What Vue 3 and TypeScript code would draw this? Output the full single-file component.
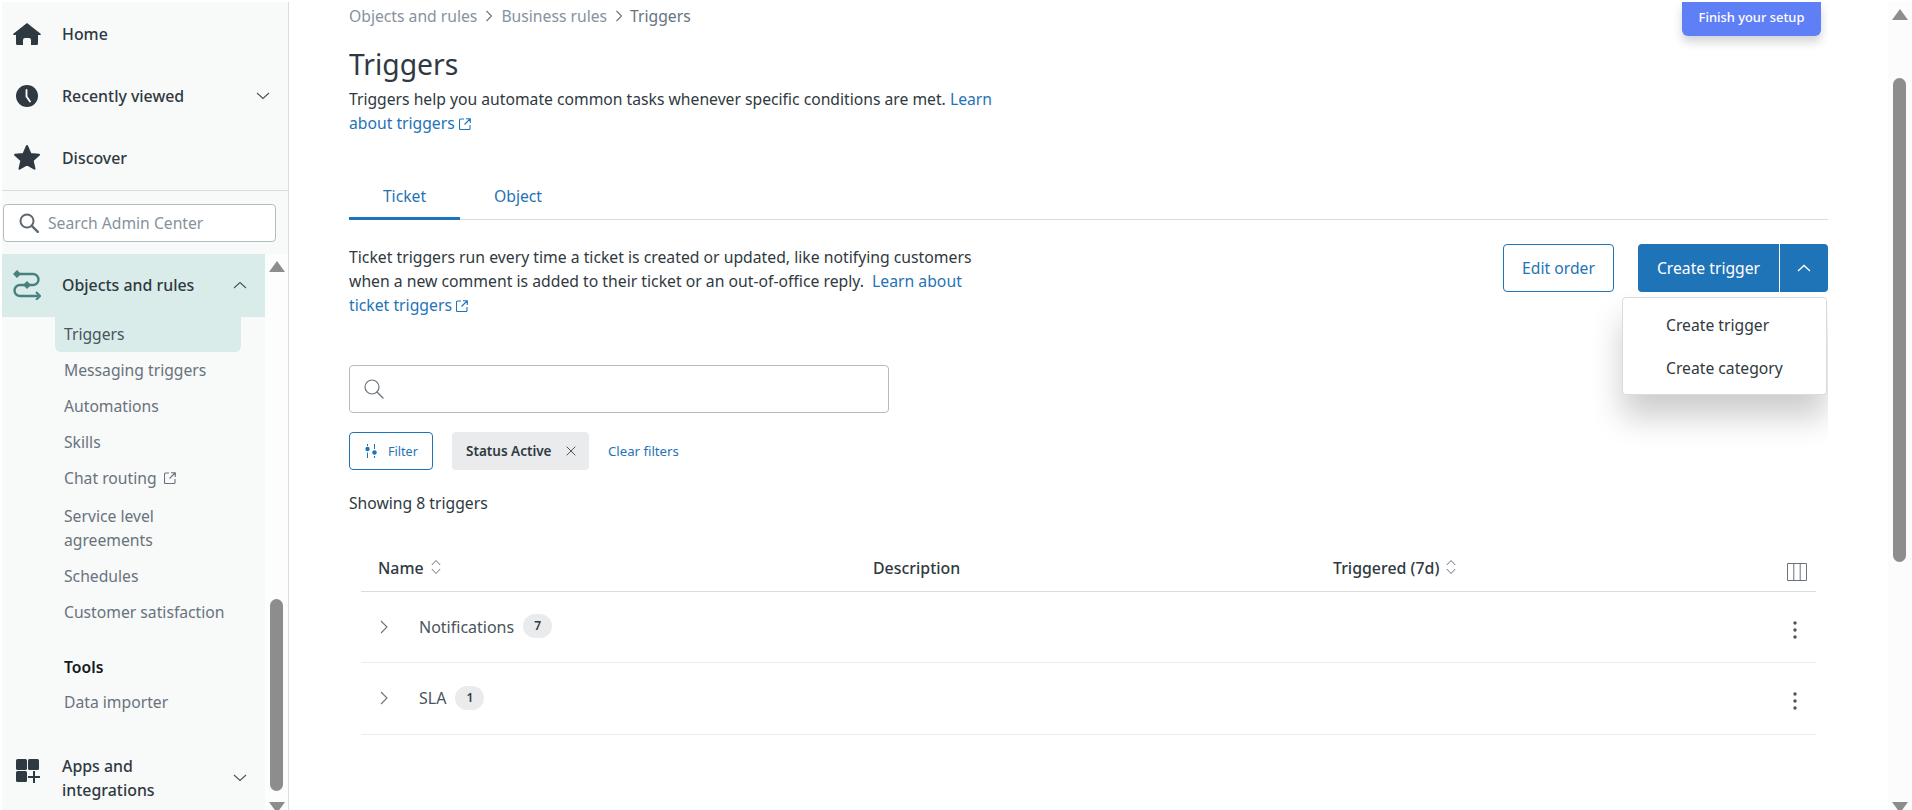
<script setup lang="ts">
interface SubItem { label: string; external?: boolean; active?: boolean; tall?: boolean }
const subItems: SubItem[] = [
  { label: 'Triggers', active: true },
  { label: 'Messaging triggers' },
  { label: 'Automations' },
  { label: 'Skills' },
  { label: 'Chat routing', external: true },
  { label: 'Service level agreements', tall: true },
  { label: 'Schedules' },
  { label: 'Customer satisfaction' },
]
const rows = [
  { name: 'Notifications', count: 7 },
  { name: 'SLA', count: 1 },
]
</script>

<template>
  <div class="app">
    <aside class="sidebar">
      <nav class="top-nav">
        <a class="nav-row">
          <svg class="nav-icon" viewBox="0 0 28 24" width="28" height="24"><path fill="#2f3941" d="M14 1 27.6 11.8c.6.5.2 1.2-.4 1.2H25v8.500a1.500 1.500 0 0 1-1.500 1.500H18v-5a2 2 0 0 0-2-2h-4a2 2 0 0 0-2 2v5H4.500A1.500 1.500 0 0 1 3 21.500V13H.8c-.6 0-1-.7-.4-1.200z"/></svg>
          <span>Home</span>
        </a>
        <a class="nav-row">
          <svg class="nav-icon" viewBox="0 0 28 24" width="28" height="24"><circle cx="14" cy="12" r="11" fill="#2f3941"/><path d="M13.500 6v6.500l3.500 5" fill="none" stroke="#fff" stroke-width="1.800" stroke-linecap="round"/></svg>
          <span>Recently viewed</span>
          <svg class="chev" viewBox="0 0 14 8" width="14" height="8"><path d="M1 1l6 5.500L13 1" fill="none" stroke="#49545c" stroke-width="1.100"/></svg>
        </a>
        <a class="nav-row">
          <svg class="nav-icon" viewBox="0 0 28 28" width="28" height="28"><path fill="#2f3941" stroke="#2f3941" stroke-width="2" stroke-linejoin="round" d="M14 2l3.500 8 8.500.8-6.400 5.600 1.900 8.300-7.500-4.400-7.500 4.400 1.900-8.300L2 10.800l8.500-.8z"/></svg>
          <span>Discover</span>
        </a>
      </nav>

      <div class="side-search">
        <svg viewBox="0 0 20 20" width="20" height="20"><circle cx="8" cy="8" r="6.500" fill="none" stroke="#5d6a72" stroke-width="2"/><path d="M12.800 12.800l6 6" stroke="#5d6a72" stroke-width="2.400" stroke-linecap="round"/></svg>
        <span>Search Admin Center</span>
      </div>

      <div class="side-scroll">
        <div class="side-list">
          <a class="product-row">
            <svg class="nav-icon" viewBox="0 0 28 30" width="28" height="30">
              <g fill="none" stroke="#47807f" stroke-width="2.400">
                <path d="M4 4h16a5.500 5.500 0 0 1 0 11H7a5.500 5.500 0 0 0 0 11h18"/>
                <path d="M23 22l4 4-4 4" stroke-width="2"/>
              </g>
              <path fill="#47807f" d="M4 0l4 4-4 4-4-4zM14 11l4 4-4 4-4-4z"/>
            </svg>
            <span>Objects and rules</span>
            <svg class="chev" viewBox="0 0 14 8" width="14" height="8"><path d="M1 7l6-5.500L13 7" fill="none" stroke="#49545c" stroke-width="1.100"/></svg>
          </a>
          <ul class="sub">
            <li v-for="item in subItems" :key="item.label" :class="{ active: item.active, tall: item.tall }">
              <span>{{ item.label }}</span>
              <svg v-if="item.external" class="ext" viewBox="0 0 12 12" width="12" height="12"><path d="M5 1H1.500a1 1 0 0 0-1 1v8.500a1 1 0 0 0 1 1H10a1 1 0 0 0 1-1V7M7 .7h4.300V5M11 1 5.500 6.500" fill="none" stroke="currentColor" stroke-width="1.100"/></svg>
            </li>
          </ul>
          <div class="tools">Tools</div>
          <div class="tool-item">Data importer</div>
          <a class="product-row apps">
            <svg class="nav-icon apps-icon" viewBox="0 0 28 24" width="28" height="24">
              <g fill="#2f3941">
                <rect x="3" y="0" width="11" height="11" rx="1.500"/>
                <rect x="15" y="0" width="11" height="11" rx="1.500"/>
                <rect x="3" y="12" width="11" height="11" rx="1.500"/>
                <path d="M20 12h2v5h5v2h-5v5h-2v-5h-5v-2h5z"/>
              </g>
            </svg>
            <span>Apps and<br>integrations</span>
            <svg class="chev" viewBox="0 0 14 8" width="14" height="8"><path d="M1 1l6 5.500L13 1" fill="none" stroke="#49545c" stroke-width="1.100"/></svg>
          </a>
        </div>
        <div class="scrollbar small">
          <i class="arrow up"></i>
          <i class="thumb"></i>
          <i class="arrow down"></i>
        </div>
      </div>
    </aside>

    <main class="main">
      <div class="content">
        <button class="finish">Finish your setup</button>
        <div class="crumbs">
          <span>Objects and rules</span>
          <svg viewBox="0 0 8 12" width="8" height="12"><path d="M1.500 1l5 5-5 5" fill="none" stroke="#68737d" stroke-width="1.100"/></svg>
          <span>Business rules</span>
          <svg viewBox="0 0 8 12" width="8" height="12"><path d="M1.500 1l5 5-5 5" fill="none" stroke="#68737d" stroke-width="1.100"/></svg>
          <span class="current">Triggers</span>
        </div>
        <h1>Triggers</h1>
        <p class="lead">Triggers help you automate common tasks whenever specific conditions are met. <a>Learn</a> <a>about triggers <svg class="ext" viewBox="0 0 12 12" width="12" height="12"><path d="M5 1H1.500a1 1 0 0 0-1 1v8.500a1 1 0 0 0 1 1H10a1 1 0 0 0 1-1V7M7 .7h4.300V5M11 1 5.500 6.500" fill="none" stroke="currentColor" stroke-width="1.100"/></svg></a></p>

        <div class="tabs">
          <div class="tab selected">Ticket</div>
          <div class="tab">Object</div>
        </div>

        <div class="intro">
          <p class="lead para">Ticket triggers run every time a ticket is created or updated, like notifying customers when a new comment is added to their ticket or an out-of-office reply. <a class="para-link">Learn about</a> <a>ticket triggers <svg class="ext" viewBox="0 0 12 12" width="12" height="12"><path d="M5 1H1.500a1 1 0 0 0-1 1v8.500a1 1 0 0 0 1 1H10a1 1 0 0 0 1-1V7M7 .7h4.300V5M11 1 5.500 6.500" fill="none" stroke="currentColor" stroke-width="1.100"/></svg></a></p>
          <div class="actions">
            <button class="btn-outline">Edit order</button>
            <div class="split">
              <button class="btn-primary">Create trigger</button>
              <button class="btn-caret"><svg viewBox="0 0 14 8" width="14" height="8"><path d="M1 7l6-5.500L13 7" fill="none" stroke="#fff" stroke-width="1.300"/></svg></button>
            </div>
            <div class="menu">
              <div>Create trigger</div>
              <div>Create category</div>
            </div>
          </div>
        </div>

        <div class="search">
          <svg viewBox="0 0 20 20" width="20" height="20"><circle cx="8" cy="8" r="7" fill="none" stroke="#68737d" stroke-width="1.200"/><path d="M13 13l6 6" stroke="#68737d" stroke-width="1.300" stroke-linecap="round"/></svg>
        </div>

        <div class="filters">
          <button class="filter-btn">
            <svg viewBox="0 0 12 14" width="12" height="14"><g fill="#1f73b7"><circle cx="2.500" cy="5" r="2.200"/><circle cx="9.500" cy="8.500" r="2.200"/><rect x="2" y="0" width="1" height="2"/><rect x="2" y="8.500" width="1" height="5.500"/><rect x="9" y="0" width="1" height="5"/><rect x="9" y="12" width="1" height="2"/></g></svg>
            <span>Filter</span>
          </button>
          <div class="chip">
            <span>Status Active</span>
            <svg viewBox="0 0 10 10" width="10" height="10"><path d="M.7.7l8.600 8.600M9.300.7.700 9.300" stroke="#49545c" stroke-width="1"/></svg>
          </div>
          <a class="clear">Clear filters</a>
        </div>

        <div class="showing">Showing 8 triggers</div>

        <div class="table">
          <div class="thead">
            <div class="th">Name <svg class="sort" viewBox="0 0 10 16" width="10" height="16"><path d="M.8 6 5 1.500 9.200 6M.8 10 5 14.500 9.200 10" fill="none" stroke="#68737d" stroke-width="1"/></svg></div>
            <div class="th">Description</div>
            <div class="th">Triggered (7d) <svg class="sort" viewBox="0 0 10 16" width="10" height="16"><path d="M.8 6 5 1.500 9.200 6M.8 10 5 14.500 9.200 10" fill="none" stroke="#68737d" stroke-width="1"/></svg></div>
            <svg class="columns" viewBox="0 0 20 20" width="20" height="20"><path d="M.5 1.500h19v17H.5zM6.800 1.500v17M13.200 1.500v17" fill="none" stroke="#68737d" stroke-width="1"/></svg>
          </div>
          <div v-for="row in rows" :key="row.name" class="row">
            <svg class="row-chev" viewBox="0 0 8 14" width="8" height="14"><path d="M1 1l6 6-6 6" fill="none" stroke="#68737d" stroke-width="1.100"/></svg>
            <span class="row-name">{{ row.name }}</span>
            <span class="badge">{{ row.count }}</span>
            <svg class="kebab" viewBox="0 0 4 18" width="4" height="18"><g fill="#49545c"><circle cx="2" cy="2" r="1.700"/><circle cx="2" cy="9" r="1.700"/><circle cx="2" cy="16" r="1.700"/></g></svg>
          </div>
        </div>
      </div>
      <div class="scrollbar large">
        <i class="arrow up"></i>
        <i class="thumb"></i>
        <i class="arrow down"></i>
      </div>
    </main>
  </div>
</template>

<style>
html, body { margin: 0; background: #fff; overflow: hidden; }
</style>

<style scoped>
* { box-sizing: border-box; }
.app {
  display: flex;
  height: 810px;
  padding: 2px 0 0 2px;
  overflow: hidden;
  font-family: "Noto Sans", "Open Sans", sans-serif;
  font-size: 15.7px;
  color: #2f3941;
  background: #fff;
}
.sidebar {
  flex: 0 0 287px;
  display: flex;
  flex-direction: column;
  background: #f8f9f9;
  border-right: 1px solid #d8dcde;
}
.top-nav { border-bottom: 1px solid #d8dcde; height: 189px; padding-top: 1px; display: flex; flex-direction: column; flex: none; }
.nav-row {
  flex: none;
  height: 62px;
  display: flex;
  align-items: center;
  padding: 0 18px 0 11px;
  gap: 21px;
  font-size: 15.9px;
  font-weight: 500;
  color: #2f3941;
}
.nav-icon { flex: none; }
.chev { margin-left: auto; flex: none; }
.side-search {
  flex: none;
  margin: 13px 12px 12px 1px;
  height: 38px;
  display: flex;
  align-items: center;
  gap: 9px;
  padding-left: 15px;
  background: #fff;
  border: 1px solid #b4bcc3;
  border-radius: 4px;
  color: #87929d;
}
.side-scroll { flex: 1; display: flex; min-height: 0; }
.side-list { flex: 0 0 263px; overflow: hidden; }
.product-row {
  display: flex;
  align-items: center;
  height: 63px;
  padding: 0 18px 2px 11px;
  gap: 21px;
  background: #d9ecea;
  font-size: 15.9px;
  font-weight: 500;
  color: #2f3941;
}
.product-row.apps {
  background: none;
  height: 48px;
  padding-bottom: 0;
  line-height: 24px;
  margin-top: 34px;
}
.apps-icon { align-self: flex-start; margin-top: 5px; }
.sub { list-style: none; margin: 0; padding: 0 0 0 53px; }
.sub li {
  height: 36px;
  width: 186px;
  padding: 0 0 2px 9px;
  display: flex;
  align-items: center;
  gap: 7px;
  line-height: 24px;
  color: #68737d;
}
.sub li.active { color: #49545c; background: #d9ecea; border-radius: 0 0 6px 6px; height: 35px; margin-bottom: 1px; }
.sub li.tall { height: 62px; align-items: flex-start; padding-top: 7px; }
.sub li.tall span { width: 120px; }
.tools { margin: 24px 0 0 62px; height: 24px; line-height: 24px; font-weight: 600; color: #16191c; }
.tool-item { margin: 5px 0 0 62px; height: 36px; line-height: 36px; color: #68737d; }

.scrollbar { position: relative; background: #fcfcfc; flex: none; }
.scrollbar.small { width: 23px; background: #fdfdfd; }
.scrollbar.large { width: 24px; margin-top: 0; }
.arrow { position: absolute; width: 0; height: 0; border-left: 8px solid transparent; border-right: 8px solid transparent; }
.arrow.up { border-bottom: 11px solid #8d8d8d; }
.arrow.down { bottom: -3px; border-top: 11px solid #8d8d8d; }
.thumb { position: absolute; width: 13px; background: #8d8d8d; border-radius: 7px; }
.small .arrow { left: 4px; }
.small .arrow.up { top: 7px; }
.small .thumb { left: 5px; top: 345px; height: 192px; }
.large .arrow { left: 4px; }
.large .arrow.up { top: 7px; }
.large .thumb { left: 5px; top: 76px; height: 484px; }

.main { flex: 1; display: flex; min-width: 0; padding-left: 60px; justify-content: space-between; }
.content { width: 1479px; position: relative; overflow: hidden; }
.finish {
  position: absolute;
  top: 0;
  right: 7px;
  width: 139px;
  height: 34px;
  border: 0;
  border-radius: 0 0 6px 6px;
  background: #5f7ff6;
  color: #fff;
  font: 500 12.900px "Noto Sans", sans-serif;
  box-shadow: 0 6px 10px rgba(30, 40, 60, .2);
  padding: 0 0 5px;
}
.crumbs { height: 28px; display: flex; align-items: center; gap: 8px; color: #87929d; }
.crumbs .current { color: #68737d; margin-left: -1px; }
h1 { margin: 14px 0 0; font-size: 28.300px; line-height: 40px; font-weight: 400; color: #2f3941; }
.lead { margin: 3px 0 0; width: 660px; line-height: 24px; color: #2f3941; }
a { color: #1f73b7; text-decoration: none; }
.ext { vertical-align: -1px; }
.tabs { margin-top: 45px; height: 40px; display: flex; border-bottom: 1px solid #d8dcde; }
.tab { width: 111px; text-align: center; line-height: 32px; height: 40px; color: #1f73b7; padding-top: 0; }
.tab.selected { border-bottom: 3px solid #1f73b7; }
.tab + .tab { width: 116px; }
.intro { position: relative; display: flex; justify-content: space-between; margin-top: 24px; }
.lead.para { margin: 1px 0 0; width: 650px; font-size: 15.75px; }
.para-link { margin-left: 4px; }
.actions { position: relative; display: flex; gap: 24px; align-self: flex-start; }
.btn-outline, .btn-primary, .btn-caret { height: 48px; font: 400 15.7px "Noto Sans", sans-serif; border-radius: 4px; padding: 0; }
.btn-outline { width: 111px; background: #fff; border: 1px solid #1f73b7; color: #1f73b7; }
.split { display: flex; gap: 1px; }
.btn-primary { width: 141px; background: #1f73b7; border: 0; color: #fff; border-radius: 4px 0 0 4px; }
.btn-caret { width: 48px; background: #1f73b7; border: 0; border-radius: 0 4px 4px 0; display: flex; align-items: center; justify-content: center; }
.menu {
  position: absolute;
  top: 53px;
  right: 1px;
  width: 205px;
  height: 98px;
  padding-top: 6px;
  background: #fff;
  border: 1px solid #d8dcde;
  border-radius: 4px;
  box-shadow: 0 22px 32px rgba(0, 0, 0, .2);
}
.menu div { height: 43px; line-height: 43px; padding-left: 43px; color: #2f3941; }
.search {
  margin-top: 48px;
  width: 540px;
  height: 48px;
  border: 1px solid #b4bcc3;
  border-radius: 4px;
  display: flex;
  align-items: center;
  padding-left: 14px;
}
.filters { margin-top: 19px; display: flex; align-items: center; height: 38px; font-size: 13.200px; }
.filter-btn {
  width: 84px;
  height: 38px;
  background: #fff;
  border: 1px solid #1f73b7;
  border-radius: 4px;
  display: flex;
  align-items: center;
  gap: 11px;
  padding: 0 0 0 15px;
  color: #1f73b7;
  font: 400 12.600px "Noto Sans", sans-serif;
}
.chip {
  margin-left: 19px;
  width: 137px;
  height: 38px;
  background: #e9ebed;
  border-radius: 4px;
  display: flex;
  align-items: center;
  gap: 14px;
  padding-left: 14px;
  font-size: 13.500px;
  font-weight: 600;
  color: #2f3941;
}
.clear { margin-left: 19px; }
.showing { margin-top: 21px; line-height: 24px; }
.table { margin: 30px 12px 0 12px; }
.thead {
  position: relative;
  height: 47px;
  display: grid;
  grid-template-columns: 512px 460px 1fr;
  border-bottom: 1px solid #d8dcde;
  align-items: center;
}
.th { font-size: 15.900px; font-weight: 500; display: flex; align-items: center; gap: 7px; padding-top: 0; }
.th:first-child { padding-left: 17px; }
.sort { margin-top: -3px; }
.columns { position: absolute; right: 9px; top: 17px; }
.row {
  height: 71px;
  display: flex;
  align-items: center;
  border-bottom: 1px solid #e9ebed;
  padding-left: 19px;
  padding-right: 19px;
}
.row:last-child { height: 72px; }
.row-chev { margin-right: 31px; margin-top: -1px; }
.row-name { font-size: 16px; color: #49545c; margin-top: -1px; }
.badge {
  margin: -2px 0 0 9px;
  min-width: 29px;
  height: 24px;
  border-radius: 12px;
  background: #e9ebed;
  text-align: center;
  line-height: 24px;
  font-size: 12px;
  font-weight: 600;
  color: #2f3941;
}
.kebab { margin-left: auto; margin-top: 5px; }
</style>
